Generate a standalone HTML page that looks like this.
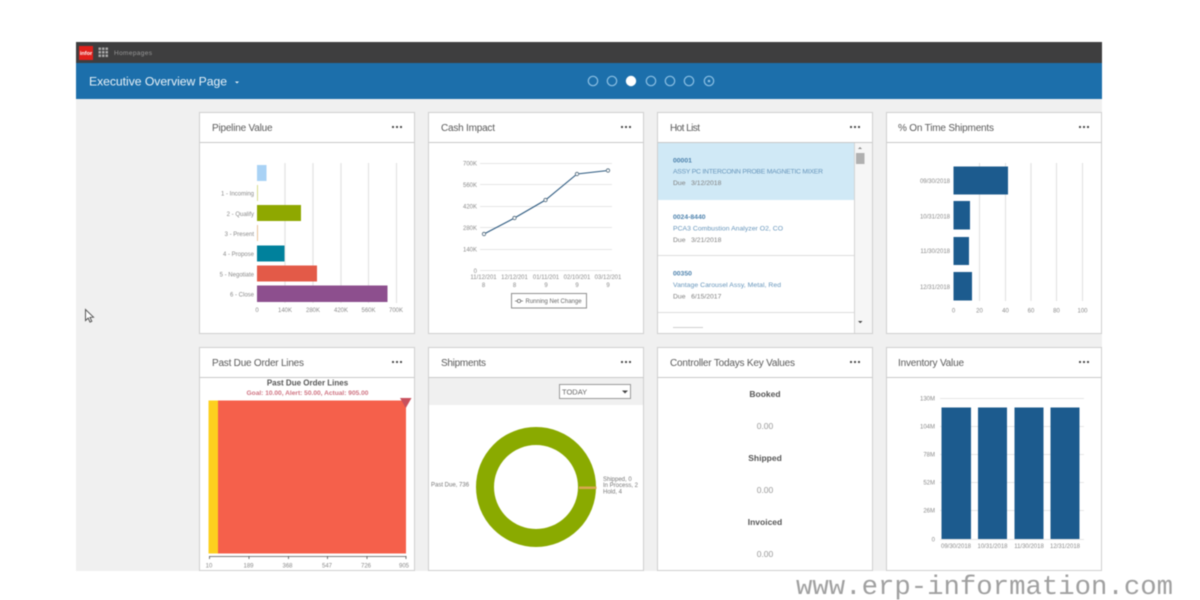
<!DOCTYPE html>
<html>
<head>
<meta charset="utf-8">
<style>
html,body{margin:0;padding:0;background:#fff;width:1200px;height:600px;overflow:hidden}
svg{display:block;position:absolute;left:0;top:0}
#m{filter:blur(.5px)}
text{font-family:"Liberation Sans",sans-serif}
.t{font-size:10px;fill:#5a5a5a}
.a{font-size:6px;fill:#8a8a8a}
.g{stroke:#e6e6e6;stroke-width:1}
.v{stroke:#e3e3e3;stroke-width:1.200}
</style>
</head>
<body>
<svg id="m" width="1200" height="600" viewBox="0 0 1200 600">
<rect x="76" y="42" width="1026" height="529" fill="#f0f0f0"/>
<rect x="76" y="42" width="1026" height="22" fill="#3e3e3f"/>
<rect x="76" y="63" width="1026" height="36" fill="#1c6fab"/>
<rect x="79" y="46" width="14" height="14" fill="#e0201b"/>
<text x="86" y="55" font-size="5.5" font-weight="bold" fill="#fff" text-anchor="middle">infor</text>
<g fill="#a8a8a8">
<rect x="98.500" y="47.500" width="2.500" height="2.500"/><rect x="102" y="47.500" width="2.500" height="2.500"/><rect x="105.500" y="47.500" width="2.500" height="2.500"/>
<rect x="98.500" y="51" width="2.500" height="2.500"/><rect x="102" y="51" width="2.500" height="2.500"/><rect x="105.500" y="51" width="2.500" height="2.500"/>
<rect x="98.500" y="54.500" width="2.500" height="2.500"/><rect x="102" y="54.500" width="2.500" height="2.500"/><rect x="105.500" y="54.500" width="2.500" height="2.500"/>
</g>
<text x="114" y="55" font-size="6.500" fill="#9a9a9a" textLength="38">Homepages</text>
<text x="89" y="85.500" font-size="12.200" fill="#e8f2f8" textLength="138">Executive Overview Page</text>
<path d="M235 81.500h4l-2 2z" fill="#e8f2f8"/>
<g fill="none" stroke="#8cc0e4" stroke-width="1.200">
<circle cx="593" cy="81" r="4.700"/><circle cx="612" cy="81" r="4.700"/><circle cx="651" cy="81" r="4.700"/><circle cx="670" cy="81" r="4.700"/><circle cx="689" cy="81" r="4.700"/><circle cx="709" cy="81" r="4.700"/>
</g>
<circle cx="709" cy="81" r="1.300" fill="#8cc0e4"/>
<circle cx="631" cy="81" r="5.200" fill="#fff"/>

<!-- cards -->
<g fill="#fff" stroke="#cfcfcf" stroke-width="1">
<rect x="199.500" y="112.500" width="215" height="221"/>
<rect x="428.500" y="112.500" width="215" height="221"/>
<rect x="657.500" y="112.500" width="215" height="221"/>
<rect x="886.500" y="112.500" width="215" height="221"/>
<rect x="199.500" y="347.500" width="215" height="223"/>
<rect x="428.500" y="347.500" width="215" height="223"/>
<rect x="657.500" y="347.500" width="215" height="223"/>
<rect x="886.500" y="347.500" width="215" height="223"/>
</g>
<g stroke="#c8c8c8" stroke-width="1">
<path d="M200 142.500h214M429 142.500h214M658 142.500h214M887 142.500h214M200 377.500h214M429 377.500h214M658 377.500h214M887 377.500h214"/>
</g>
<text class="t" x="212" y="131" textLength="60.500">Pipeline Value</text>
<text class="t" x="441" y="131" textLength="54">Cash Impact</text>
<text class="t" x="670" y="131" textLength="30">Hot List</text>
<text class="t" x="898" y="131" textLength="96">% On Time Shipments</text>
<text class="t" x="212" y="366" textLength="92">Past Due Order Lines</text>
<text class="t" x="441" y="366" textLength="45">Shipments</text>
<text class="t" x="670" y="366" textLength="125">Controller Todays Key Values</text>
<text class="t" x="898" y="366" textLength="66">Inventory Value</text>
<g fill="#444">
<circle cx="393" cy="127" r="1.100"/><circle cx="397" cy="127" r="1.100"/><circle cx="401" cy="127" r="1.100"/>
<circle cx="622" cy="127" r="1.100"/><circle cx="626" cy="127" r="1.100"/><circle cx="630" cy="127" r="1.100"/>
<circle cx="851" cy="127" r="1.100"/><circle cx="855" cy="127" r="1.100"/><circle cx="859" cy="127" r="1.100"/>
<circle cx="1080" cy="127" r="1.100"/><circle cx="1084" cy="127" r="1.100"/><circle cx="1088" cy="127" r="1.100"/>
<circle cx="393" cy="362" r="1.100"/><circle cx="397" cy="362" r="1.100"/><circle cx="401" cy="362" r="1.100"/>
<circle cx="622" cy="362" r="1.100"/><circle cx="626" cy="362" r="1.100"/><circle cx="630" cy="362" r="1.100"/>
<circle cx="851" cy="362" r="1.100"/><circle cx="855" cy="362" r="1.100"/><circle cx="859" cy="362" r="1.100"/>
<circle cx="1080" cy="362" r="1.100"/><circle cx="1084" cy="362" r="1.100"/><circle cx="1088" cy="362" r="1.100"/>
</g>

<!-- pipeline -->
<path class="v" d="M285 163v140M313 163v140M341 163v140M368.500 163v140M396.500 163v140"/>
<rect x="257" y="165" width="9.500" height="16" fill="#a9d2f5"/>
<rect x="257" y="185" width="1" height="16" fill="#d8dc8c"/>
<rect x="257" y="205" width="44" height="16" fill="#8fa800"/>
<rect x="257" y="225" width="1" height="16" fill="#e8c49a"/>
<rect x="257" y="245.500" width="27.500" height="16" fill="#00819c"/>
<rect x="257" y="265.500" width="60" height="16" fill="#e35a48"/>
<rect x="257" y="285.500" width="130.500" height="16.500" fill="#8d4f8e"/>
<g class="a" text-anchor="end">
<text x="254" y="195.500">1 - Incoming</text><text x="254" y="216">2 - Qualify</text><text x="254" y="236">3 - Present</text><text x="254" y="256">4 - Propose</text><text x="254" y="276.500">5 - Negotiate</text><text x="254" y="296.500">6 - Close</text>
</g>
<g class="a" text-anchor="middle">
<text x="257" y="312">0</text><text x="285" y="312">140K</text><text x="313" y="312">280K</text><text x="341" y="312">420K</text><text x="368.500" y="312">560K</text><text x="396" y="312">700K</text>
</g>

<!-- cash -->
<path class="g" d="M480 163.500h132M480 184.500h132M480 206.500h132M480 227.500h132M480 249.500h132M480 270.500h132"/>
<path d="M484 234L514.500 218L545.500 200L577 174L608 170.500" fill="none" stroke="#2d5a80" stroke-width="1.100"/>
<g fill="#fff" stroke="#4a6478" stroke-width=".8">
<circle cx="484" cy="234" r="1.700"/><circle cx="514.500" cy="218" r="1.700"/><circle cx="545.500" cy="200" r="1.700"/><circle cx="577" cy="174" r="1.700"/><circle cx="608" cy="170.500" r="1.700"/>
</g>
<g class="a" text-anchor="end">
<text x="477" y="165.500">700K</text><text x="477" y="187">560K</text><text x="477" y="208.500">420K</text><text x="477" y="230">280K</text><text x="477" y="251.500">140K</text><text x="477" y="273">0</text>
</g>
<g class="a" text-anchor="middle">
<text x="483.500" y="279">11/12/201</text><text x="483.500" y="287">8</text>
<text x="514.500" y="279">12/12/201</text><text x="514.500" y="287">8</text>
<text x="546" y="279">01/11/201</text><text x="546" y="287">9</text>
<text x="577" y="279">02/10/201</text><text x="577" y="287">9</text>
<text x="608" y="279">03/12/201</text><text x="608" y="287">9</text>
</g>
<rect x="511.500" y="293.500" width="75" height="14.500" fill="#fff" stroke="#8f8f8f"/>
<path d="M515 301h8" stroke="#666" stroke-width=".7"/><circle cx="519" cy="301" r="1.700" fill="#fff" stroke="#555" stroke-width=".7"/>
<text x="525.500" y="303" font-size="6" fill="#666">Running Net Change</text>

<!-- hot list -->
<rect x="658" y="143" width="197" height="57" fill="#d0e9f6"/>
<path d="M658 255.500h197M658 312.500h197" stroke="#dcdcdc"/>
<rect x="855" y="143" width="17" height="190" fill="#f6f6f6"/>
<path d="M854.500 143v190" stroke="#d4d4d4"/>
<rect x="856" y="153" width="8.500" height="11" fill="#b0b0b0"/>
<path d="M858 149l2-2 2 2z" fill="#888"/><path d="M858 321h4.500l-2.200 2.200z" fill="#444"/>
<g font-size="6.800">
<text x="673" y="162.500" font-weight="bold" fill="#4d82ad">00001</text>
<text x="673" y="173.500" fill="#6695bb" textLength="150">ASSY PC INTERCONN PROBE MAGNETIC MIXER</text>
<text x="673" y="185" fill="#808080">Due&#160;&#160;&#160;3/12/2018</text>
<text x="673" y="219" font-weight="bold" fill="#4d82ad">0024-8440</text>
<text x="673" y="230.500" fill="#6695bb" textLength="110">PCA3 Combustion Analyzer O2, CO</text>
<text x="673" y="242" fill="#808080">Due&#160;&#160;&#160;3/21/2018</text>
<text x="673" y="275.500" font-weight="bold" fill="#4d82ad">00350</text>
<text x="673" y="287" fill="#6695bb" textLength="108">Vantage Carousel Assy, Metal, Red</text>
<text x="673" y="298.500" fill="#808080">Due&#160;&#160;&#160;6/15/2017</text>
</g>
<rect x="673" y="327" width="30" height="1" fill="#cfcfcf"/>

<!-- on time -->
<path class="v" d="M979.500 163v138M1005.500 163v138M1031 163v138M1056.500 163v138M1082.500 163v138"/>
<g fill="#1c5b8e">
<rect x="953.500" y="166.500" width="54.500" height="28"/><rect x="953.500" y="201" width="16.500" height="28.500"/><rect x="953.500" y="237" width="15.500" height="28"/><rect x="953.500" y="272" width="18.500" height="28.500"/>
</g>
<g class="a" text-anchor="end">
<text x="950" y="183">09/30/2018</text><text x="950" y="218.500">10/31/2018</text><text x="950" y="253">11/30/2018</text><text x="950" y="289">12/31/2018</text>
</g>
<g class="a" text-anchor="middle">
<text x="953.500" y="312.500">0</text><text x="979.500" y="312.500">20</text><text x="1005.500" y="312.500">40</text><text x="1031" y="312.500">60</text><text x="1056.500" y="312.500">80</text><text x="1082.500" y="312.500">100</text>
</g>

<!-- past due -->
<text x="307.500" y="385.500" font-size="8" font-weight="bold" fill="#555" text-anchor="middle">Past Due Order Lines</text>
<text x="307.500" y="395" font-size="6.600" font-weight="bold" fill="#cf7482" text-anchor="middle">Goal: 10.00, Alert: 50.00, Actual: 905.00</text>
<rect x="208.500" y="400.500" width="10" height="153" fill="#fdd01f"/>
<rect x="218" y="400.500" width="188" height="153" fill="#f5604b"/>
<path d="M400 398h11.500l-5.700 10z" fill="#c8505c"/>
<path d="M209.500 556.500h197M209.500 556v3M249 556v3M288.500 556v3M327.500 556v3M367 556v3M406 556v3" stroke="#555" fill="none" stroke-width=".8"/>
<g class="a" text-anchor="middle">
<text x="209" y="567.500">10</text><text x="248.500" y="567.500">189</text><text x="287.500" y="567.500">368</text><text x="327" y="567.500">547</text><text x="366" y="567.500">726</text><text x="404" y="567.500">905</text>
</g>

<!-- shipments -->
<rect x="429" y="378" width="214" height="27" fill="#f0f0f0"/>
<rect x="559.500" y="384.500" width="71" height="14" fill="#fff" stroke="#9a9a9a"/>
<text x="562" y="394.500" font-size="7.500" fill="#666">TODAY</text>
<path d="M622 390.500h6l-3 3z" fill="#444"/>
<circle cx="536" cy="487" r="51" fill="none" stroke="#8aaa00" stroke-width="18"/>
<rect x="579" y="486.500" width="17.500" height="2.500" fill="#d8a850"/>
<g font-size="6" fill="#777">
<text x="431" y="486.500">Past Due, 736</text>
<text x="603" y="481">Shipped, 0</text><text x="603" y="487">In Process, 2</text><text x="603" y="493.500">Hold, 4</text>
</g>

<!-- controller -->
<g font-size="8.500" font-weight="bold" fill="#555" text-anchor="middle">
<text x="765" y="397">Booked</text><text x="765" y="461">Shipped</text><text x="765" y="525">Invoiced</text>
</g>
<g font-size="8.500" fill="#999" text-anchor="middle">
<text x="765" y="429">0.00</text><text x="765" y="493">0.00</text><text x="765" y="557">0.00</text>
</g>

<!-- inventory -->
<path class="g" d="M940 398.500h144M940 426.500h144M940 454.500h144M940 482.500h144M940 510.500h144M940 539.500h144"/>
<g fill="#1c5b8e">
<rect x="941.500" y="407.500" width="29.500" height="131.500"/><rect x="978" y="407.500" width="29" height="131.500"/><rect x="1014.500" y="407.500" width="29" height="131.500"/><rect x="1050.500" y="407.500" width="29" height="131.500"/>
</g>
<g class="a" text-anchor="end">
<text x="935" y="400.500">130M</text><text x="935" y="428.500">104M</text><text x="935" y="456.500">78M</text><text x="935" y="484.500">52M</text><text x="935" y="512.500">26M</text><text x="935" y="541.500">0</text>
</g>
<g class="a" text-anchor="middle">
<text x="956" y="548">09/30/2018</text><text x="992.500" y="548">10/31/2018</text><text x="1029" y="548">11/30/2018</text><text x="1065" y="548">12/31/2018</text>
</g>

<!-- cursor -->
<path d="M85.500 309.500v11l2.700-2.400 1.800 4 1.800-.8-1.800-3.900 3.500-.2z" fill="#fff" stroke="#555" stroke-width="1"/>

<!-- watermark -->
<text x="796" y="594" font-size="27" fill="#a0a0a0" textLength="377" lengthAdjust="spacingAndGlyphs" style="font-family:'Liberation Mono',monospace">www.erp-information.com</text>
</svg>
</body>
</html>
